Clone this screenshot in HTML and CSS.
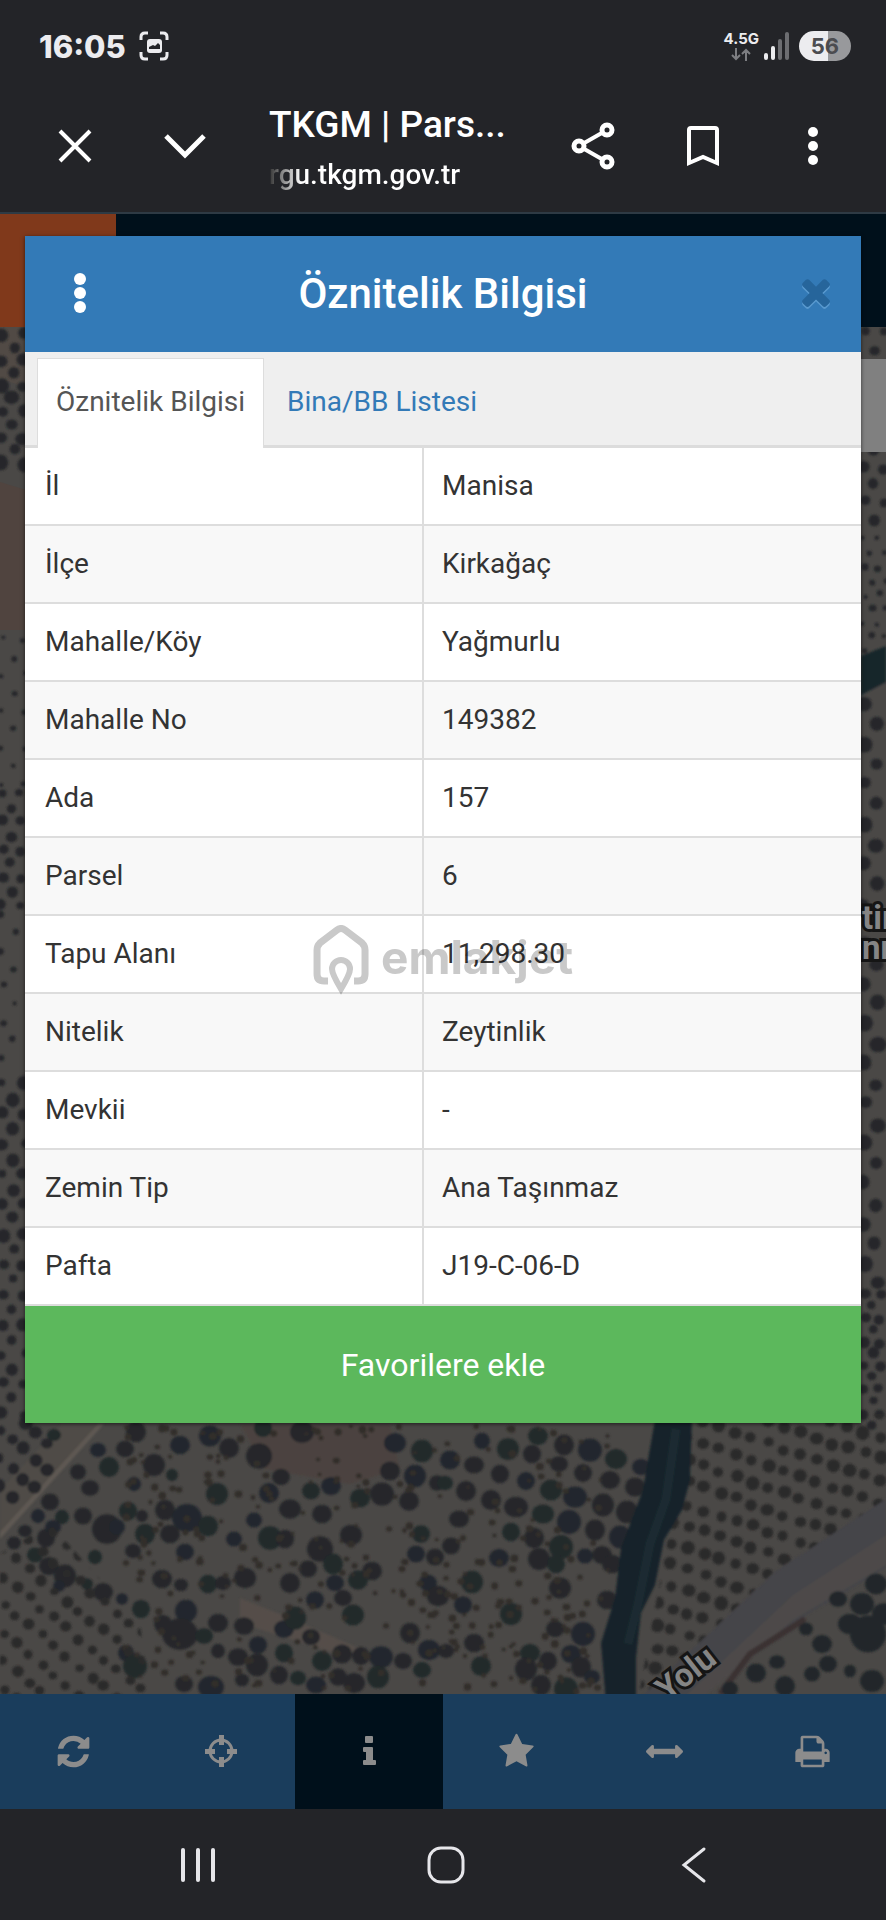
FILE: index.html
```html
<!DOCTYPE html>
<html lang="tr">
<head>
  <meta charset="UTF-8" />
  <meta name="viewport" content="width=device-width, initial-scale=1.0"/>
  <title>TKGM | Parsel Sorgu</title>
  <link rel="stylesheet" href="styles.css">
</head>
<body>
  <div class="status-bar">
    <span class="clock">16:05</span>
    <svg class="capture-icon" width="30" height="30" viewBox="0 0 30 30">
      <path d="M2 9V6q0-4 4-4h3M21 2h3q4 0 4 4v3M28 21v3q0 4-4 4h-3M9 28H6q-4 0-4-4v-3" fill="none" stroke="#ececef" stroke-width="3"/>
      <rect x="8" y="8" width="15" height="14" rx="3" fill="#ececef"/>
      <path d="M10 18v-2l4-2 2 1 3-3 2 2v4z" fill="#232428"/>
    </svg>
    <div class="network">
      <span>4.5G</span>
      <svg width="20" height="13" viewBox="0 0 20 13">
        <path d="M5 0v11M1 7l4 4 4-4M15 13V2M11 6l4-4 4 4" fill="none" stroke="#7d7e82" stroke-width="2"/>
      </svg>
    </div>
    <svg class="signal" width="27" height="28" viewBox="0 0 27 28">
      <g stroke-width="4" stroke-linecap="round">
        <path d="M3 23v3M10 16v10" stroke="#ececef"/>
        <path d="M17 9v17M24 2v24" stroke="#6c6d71"/>
      </g>
    </svg>
    <span class="battery">56</span>
  </div>

  <header class="browser-bar">
    <button type="button" aria-label="Kapat">
      <svg width="34" height="34" viewBox="0 0 34 34"><path d="M2 2l30 30M32 2L2 32" stroke="#fff" stroke-width="4"/></svg>
    </button>
    <button type="button" aria-label="Küçült">
      <svg width="42" height="26" viewBox="0 0 42 26"><path d="M2 3l19 19L40 3" fill="none" stroke="#fff" stroke-width="5"/></svg>
    </button>
    <div class="page-info">
      <div class="page-title">TKGM | Pars...</div>
      <div class="page-url">rgu.tkgm.gov.tr</div>
    </div>
    <button type="button" aria-label="Paylaş">
      <svg width="44" height="48" viewBox="0 0 44 48" fill="none" stroke="#fff">
        <path d="M8 24L36 8M8 24l28 16" stroke-width="4"/>
        <g fill="#232428" stroke-width="5"><circle cx="8" cy="24" r="5"/><circle cx="36" cy="8" r="5"/><circle cx="36" cy="40" r="5"/></g>
      </svg>
    </button>
    <button type="button" aria-label="Yer imi">
      <svg width="34" height="42" viewBox="0 0 34 42"><path d="M3 38V5q0-2 2-2h24q2 0 2 2v33l-14-6z" fill="none" stroke="#fff" stroke-width="4"/></svg>
    </button>
    <button type="button" aria-label="Menü">
      <svg width="10" height="38" viewBox="0 0 10 38" fill="#fff"><circle cx="5" cy="5" r="5"/><circle cx="5" cy="19" r="5"/><circle cx="5" cy="33" r="5"/></svg>
    </button>
  </header>

  <main class="viewport">
    <svg class="map" viewBox="0 0 886 1480" preserveAspectRatio="xMidYMax slice" aria-hidden="true">
      <defs>
        <clipPath id="east"><path d="M692 1200h200v85L776 1356 640 1485h-2l30-160z"/></clipPath>
        <clipPath id="west"><path d="M0 1340l50-30 90 100 10 80H0z"/></clipPath>
        <filter id="soft"><feGaussianBlur stdDeviation="1"/></filter>
      </defs>
      <rect width="886" height="1480" fill="#4a4846"/>
      <path d="M0 268l26 8v140H0z" fill="#50443f"/>
      <path d="M0 113h26v60L0 165z" fill="#514a45"/>
      <g filter="url(#soft)">
        <path d="M240 1210h150l10 45-50 15-85-15z" fill="#4c433f"/>
        <path d="M0 1276l62-66h42L0 1322z" fill="#4f4b47"/>
        <path d="M104 1210L0 1325v-7l98-108z" fill="#5e5953"/>
        <path d="M240 1384l50 20 80 35-20 5-110-35z" fill="#544e49"/>
        <g id="trees" fill="#25282b"></g>
        <g id="orchard-west" clip-path="url(#west)" fill="#2c2a29"></g>
        <g id="orchard-east" clip-path="url(#east)" fill="#2c2b2b"></g>
        <path d="M656 1200h36l-2 66-8 30-18 30-9 45-14 28-5 45v45h-30l-5-60 14-45 6-50 22-58 6-36z" fill="#17242a"/>
        <path d="M676 1215l-10 70-16 45-12 60-10 40" fill="none" stroke="#1a2b30" stroke-width="9"/>
        <path d="M886 1285l-110 72-136 127h50l103-75 93-55z" fill="#454448"/>
        <path d="M886 1321l-93 60-110 103h20l90-78 93-55z" fill="#4d4a48"/>
        <path d="M805 1405l-55 35-30 40" fill="none" stroke="#3a3133" stroke-width="6"/>
        <g id="village" fill="#22282a"></g>
        <path d="M861 442l25-10v36l-25 13z" fill="#16252a"/>
      </g>
      <rect x="861" y="145" width="25" height="93" fill="#808080"/>
      <g class="map-label">
        <text x="862" y="715">tir</text>
        <text x="862" y="745">nn</text>
        <text x="667" y="1488" transform="rotate(-38 667 1488)">Yolu</text>
      </g>
    </svg>
    <div class="site-header"><div class="site-logo"></div></div>

    <section class="modal" role="dialog" aria-labelledby="modal-title">
      <div class="modal-header">
        <button type="button" class="menu" aria-label="Seçenekler">
          <svg width="12" height="40" viewBox="0 0 12 40" fill="#fff"><circle cx="6" cy="6" r="6"/><circle cx="6" cy="20" r="6"/><circle cx="6" cy="34" r="6"/></svg>
        </button>
        <h1 id="modal-title">Öznitelik Bilgisi</h1>
        <button type="button" class="close" aria-label="Kapat">
          <svg width="42" height="42" viewBox="0 60 1792 1792"><path d="M1490 1322q0 40-28 68l-136 136q-28 28-68 28t-68-28l-294-294-294 294q-28 28-68 28t-68-28l-136-136q-28-28-28-68t28-68l294-294-294-294q-28-28-28-68t28-68l136-136q28-28 68-28t68 28l294 294 294-294q28-28 68-28t68 28l136 136q28 28 28 68t-28 68l-294 294 294 294q28 28 28 68z"/></svg>
        </button>
      </div>
      <nav class="tabs">
        <a href="#" class="active">Öznitelik Bilgisi</a>
        <a href="#">Bina/BB Listesi</a>
      </nav>
      <table>
        <tbody>
          <tr><th scope="row">İl</th><td>Manisa</td></tr>
          <tr><th scope="row">İlçe</th><td>Kirkağaç</td></tr>
          <tr><th scope="row">Mahalle/Köy</th><td>Yağmurlu</td></tr>
          <tr><th scope="row">Mahalle No</th><td>149382</td></tr>
          <tr><th scope="row">Ada</th><td>157</td></tr>
          <tr><th scope="row">Parsel</th><td>6</td></tr>
          <tr><th scope="row">Tapu Alanı</th><td>11,298.30</td></tr>
          <tr><th scope="row">Nitelik</th><td>Zeytinlik</td></tr>
          <tr><th scope="row">Mevkii</th><td>-</td></tr>
          <tr><th scope="row">Zemin Tip</th><td>Ana Taşınmaz</td></tr>
          <tr><th scope="row">Pafta</th><td>J19-C-06-D</td></tr>
        </tbody>
      </table>
      <button type="button" class="favorite">Favorilere ekle</button>
    </section>
  </main>

  <nav class="toolbar">
    <button type="button" aria-label="Yenile">
      <svg viewBox="0 0 1792 1792"><path d="M1639 1056q0 5-1 7-64 268-268 434.500T892 1664q-146 0-282.500-55T366 1452l-129 129q-19 19-45 19t-45-19-19-45v-448q0-26 19-45t45-19h448q26 0 45 19t19 45-19 45l-137 137q71 66 161 102t187 36q134 0 250-65t186-179q11-17 53-117 8-23 30-23h192q13 0 22.500 9.500t9.500 22.500zm25-800v448q0 26-19 45t-45 19h-448q-26 0-45-19t-19-45 19-45l138-138q-148-137-349-137-134 0-250 65T460 628q-11 17-53 117-8 23-30 23H178q-13 0-22.500-9.500T146 736v-7q65-268 270-434.500T896 128q146 0 284 55.500T1425 340l130-129q19-19 45-19t45 19 19 45z"/></svg>
    </button>
    <button type="button" aria-label="Konumum">
      <svg viewBox="0 0 37 37"><circle cx="18" cy="18" r="11" fill="none" stroke="#8c8c8c" stroke-width="3"/><path d="M16 2h5v10h-5zM16 24h5v10h-5zM2 16h10v5H2zM24 16h10v5H24z"/></svg>
    </button>
    <button type="button" class="active" aria-label="Bilgi">
      <svg viewBox="0 0 37 37"><path d="M15 3h6q1 0 1 1v5q0 1-1 1h-6q-1 0-1-1V4q0-1 1-1zM13 14h8q1 0 1 1v12h2q1 0 1 1v3q0 1-1 1H13q-1 0-1-1v-3q0-1 1-1h2v-8h-2q-1 0-1-1v-3q0-1 1-1z"/></svg>
    </button>
    <button type="button" aria-label="Favoriler">
      <svg viewBox="0 0 1792 1792"><path d="M1728 647q0 22-26 48l-363 354 86 500q1 7 1 20 0 21-10.500 35.500T1385 1619q-19 0-40-12l-449-236-449 236q-22 12-40 12-21 0-31.500-14.500T365 1569q0-6 2-20l86-500L89 695q-25-27-25-48 0-37 56-46l502-73L847 73q19-41 49-41t49 41l225 455 502 73q56 9 56 46z"/></svg>
    </button>
    <button type="button" aria-label="Ölçüm">
      <svg viewBox="0 0 1792 1792"><path d="M1792 896q0 26-19 45l-256 256q-19 19-45 19t-45-19-19-45v-128H384v128q0 26-19 45t-45 19-45-19L19 941q-19-19-19-45t19-45l256-256q19-19 45-19t45 19 19 45v128h1024V640q0-26 19-45t45-19 45 19l256 256q19 19 19 45z"/></svg>
    </button>
    <button type="button" aria-label="Yazdır">
      <svg viewBox="0 0 1792 1792"><path d="M448 1536h896v-256H448v256zm0-640h896V512h-160q-40 0-68-28t-28-68V256H448v640zm1152 64q0-26-19-45t-45-19-45 19-19 45 19 45 45 19 45-19 19-45zm128 0v416q0 13-9.500 22.500t-22.500 9.500h-224v160q0 40-28 68t-68 28H416q-40 0-68-28t-28-68v-160H96q-13 0-22.500-9.500T64 1376V960q0-79 56.500-135.500T256 768h64V224q0-40 28-68t68-28h672q40 0 88 20t76 48l152 152q28 28 48 76t20 88v256h64q79 0 135.500 56.500T1728 960z"/></svg>
    </button>
  </nav>

  <nav class="system-nav">
    <button type="button" aria-label="Son uygulamalar">
      <svg width="34" height="36" viewBox="0 0 34 36"><path d="M2 3v30M17 3v30M32 3v30" stroke="#e6e6ea" stroke-width="4" stroke-linecap="round"/></svg>
    </button>
    <button type="button" aria-label="Ana ekran">
      <svg width="38" height="38" viewBox="0 0 38 38"><rect x="2" y="2" width="34" height="34" rx="12" fill="none" stroke="#e6e6ea" stroke-width="3"/></svg>
    </button>
    <button type="button" aria-label="Geri">
      <svg width="26" height="38" viewBox="0 0 26 38"><path d="M23 3L3 19l20 16" fill="none" stroke="#e6e6ea" stroke-width="3" stroke-linecap="round"/></svg>
    </button>
  </nav>

  <div class="watermark" aria-hidden="true">
    <svg width="56" height="70" viewBox="0 0 56 70" fill="none" stroke="#c9c9c9" stroke-width="7">
      <path d="M15 56h-4q-7 0-7-7V25q0-4 3-7L24 5q4-3 8 0l17 13q3 3 3 7v24q0 7-7 7h-4" />
      <path d="M28 64q-9-15-9-20a9 9 0 0 1 18 0q0 5-9 20z" stroke-width="6"/>
    </svg>
    <span>emlakjet</span>
  </div>

  <script src="map.js"></script>
</body>
</html>
```
FILE: styles.css
```css
* {
  box-sizing: border-box;
}
body {
  display: flex;
  flex-direction: column;
  min-height: 100vh;
  margin: 0;
  font-family: Roboto, "Liberation Sans", sans-serif;
  font-size: 28px;
  color: #333;
  background: #232428;
}
button {
  display: flex;
  align-items: center;
  justify-content: center;
  padding: 0;
  border: none;
  background: none;
  font-family: inherit;
  cursor: pointer;
}

/* Phone status bar */
.status-bar {
  display: flex;
  align-items: center;
  height: 92px;
  padding: 0 35px 0 39px;
  font-family: Inter, "Liberation Sans", sans-serif;
  font-weight: 700;
  color: #ececef;
}
.clock {
  font-size: 31px;
  font-weight: 800;
}
.capture-icon {
  margin-left: 13px;
}
.network {
  display: flex;
  flex-direction: column;
  align-items: center;
  gap: 2px;
  margin-left: auto;
  font-size: 15px;
  line-height: 14px;
}
.signal {
  margin: 0 9px 0 4px;
}
.battery {
  width: 52px;
  border-radius: 15px;
  background: linear-gradient(90deg, #ececef 56%, #98999c 56%);
  color: #4b4c50;
  font-size: 22px;
  line-height: 30px;
  text-align: center;
}

/* Browser bar */
.browser-bar {
  display: flex;
  align-items: center;
  height: 122px;
  padding: 0 18px 12px 20px;
  border-bottom: 2px solid #2e3a44;
}
.browser-bar button {
  flex: 0 0 110px;
  height: 100px;
}
.page-info {
  flex: 1;
  min-width: 0;
  margin-left: 29px;
  padding-top: 6px;
  color: #fff;
  white-space: nowrap;
}
.page-title {
  font-size: 37px;
  font-weight: 500;
  line-height: 52px;
}
.page-url {
  font-size: 28px;
  font-weight: 500;
  line-height: 48px;
  background: linear-gradient(90deg, #333 0, #fff 32px);
  background-clip: text;
  color: transparent;
}

/* Map page */
.viewport {
  position: relative;
  flex: 1;
  overflow: hidden;
  padding: 22px 25px;
}
.map {
  position: absolute;
  inset: 0;
  width: 100%;
  height: 100%;
}
.map-label {
  font-size: 33px;
  font-weight: 700;
  fill: #858585;
  stroke: #151515;
  stroke-width: 6px;
  paint-order: stroke;
}
.site-header {
  position: absolute;
  inset: 0 0 auto;
  height: 113px;
  background: #00101b;
}
.site-logo {
  width: 116px;
  height: 100%;
  background: #80391b;
}

/* Attribute dialog */
.modal {
  position: relative;
  background: #fff;
  box-shadow: 0 1px 4px rgba(0, 0, 0, 0.6);
}
.modal-header {
  display: grid;
  grid-template-columns: 110px 1fr 110px;
  align-items: center;
  height: 116px;
  padding-bottom: 2px;
  background: #337ab7;
}
.modal-header h1 {
  margin: 0;
  color: #fff;
  font-size: 42px;
  font-weight: 500;
  text-align: center;
}
.close {
  justify-content: flex-end;
  padding-right: 24px;
}
.close path {
  fill: #26659b;
  filter: drop-shadow(0 80px 0 #5b9bd0);
}
.tabs {
  display: flex;
  gap: 4px;
  height: 96px;
  padding: 6px 12px 0;
  background: #efefef;
  border-bottom: 3px solid #dcdcdc;
}
.tabs a {
  height: 90px;
  padding: 0 18px;
  border: 1px solid transparent;
  border-bottom: none;
  color: #337ab7;
  line-height: 86px;
  text-decoration: none;
}
.tabs .active {
  border-color: #ddd;
  background: #fff;
  color: #555;
}
table {
  width: 100%;
  border-collapse: separate;
  border-spacing: 0;
}
th,
td {
  padding: 18px;
  border-bottom: 2px solid #ddd;
  font-weight: 400;
  line-height: 40px;
  text-align: left;
}
th {
  width: 399px;
  padding-left: 20px;
  border-right: 2px solid #ddd;
}
tr:nth-child(even) {
  background: #f8f8f8;
}
.favorite {
  width: 100%;
  height: 117px;
  background: #5cb85c;
  color: #fff;
  font-size: 32px;
}

/* Map tools */
.toolbar {
  display: flex;
  height: 115px;
  background: #1a3d5c;
}
.toolbar button {
  flex: 1;
}
.toolbar .active {
  background: #00101b;
}
.toolbar svg {
  width: 37px;
  height: 37px;
  fill: #8c8c8c;
}

.system-nav {
  display: flex;
  height: 111px;
  padding: 0 68px 0 74px;
}
.system-nav button {
  flex: 1;
}

.watermark {
  position: fixed;
  top: 50%;
  left: 50%;
  display: flex;
  align-items: center;
  gap: 12px;
  transform: translate(-50%, -50%);
  color: #c9c9c9;
  font-family: Inter, sans-serif;
  font-size: 46px;
  font-weight: 700;
  line-height: 50px;
  mix-blend-mode: multiply;
  pointer-events: none;
}
.watermark span {
  padding-bottom: 6px;
}
```
FILE: map.js
```js
// Small seeded generator so the trees stay in place between loads
let seed = 7;
function rand(min, max) {
  seed = (seed * 16807) % 2147483647;
  return min + (seed / 2147483647) * (max - min);
}

function addTree(group, x, y, r, fill) {
  const el = document.createElementNS("http://www.w3.org/2000/svg", "ellipse");
  el.setAttribute("cx", x.toFixed(1));
  el.setAttribute("cy", y.toFixed(1));
  el.setAttribute("rx", r.toFixed(1));
  el.setAttribute("ry", (r * rand(0.85, 1.05)).toFixed(1));
  if (fill) el.setAttribute("fill", fill);
  document.getElementById(group).appendChild(el);
}

// Trees on a slanted grid inside a box
function plant(group, x0, y0, x1, y1, stepX, stepY, rMin, rMax, slope) {
  let row = 0;
  for (let y = y0; y < y1; y += stepY) {
    for (let x = x0 + (row % 2) * stepX / 2; x < x1; x += stepX) {
      addTree(group, x + rand(-2, 2), y + (x - x0) * slope + rand(-2, 2), rand(rMin, rMax));
    }
    row++;
  }
}

// Large trees below the dialog: x, y, radius
const bigTrees = [
  [54, 1221, 7], [136, 1218, 10], [125, 1235, 9], [98, 1236, 8], [109, 1253, 10], [78, 1258, 8],
  [180, 1231, 10], [154, 1251, 11], [172, 1261, 6], [210, 1222, 11], [229, 1234, 10], [259, 1242, 13],
  [263, 1214, 9], [302, 1218, 12], [281, 1263, 9], [269, 1279, 10], [217, 1280, 11], [90, 1274, 9],
  [134, 1270, 7], [50, 1288, 9], [62, 1303, 7], [38, 1302, 7], [25, 1317, 7], [83, 1302, 9],
  [128, 1297, 9], [142, 1302, 6], [107, 1315, 15], [117, 1313, 8], [145, 1320, 10], [165, 1296, 10],
  [187, 1304, 15], [170, 1320, 10], [208, 1312, 10], [185, 1338, 9], [133, 1337, 8], [14, 1329, 7],
  [35, 1341, 8], [49, 1352, 10], [65, 1362, 11], [59, 1372, 6], [95, 1343, 7], [46, 1324, 9],
  [53, 1313, 8], [103, 1378, 10], [87, 1370, 6], [122, 1385, 6], [162, 1365, 10], [181, 1371, 7],
  [208, 1370, 9], [223, 1369, 8], [245, 1364, 11], [234, 1325, 8], [270, 1324, 12], [285, 1325, 9],
  [254, 1306, 8], [290, 1295, 11], [311, 1277, 9], [331, 1272, 10], [322, 1300, 10], [351, 1321, 11],
  [360, 1284, 10], [382, 1280, 12], [409, 1287, 10], [395, 1229, 11], [422, 1237, 11], [390, 1257, 10],
  [415, 1262, 11], [437, 1269, 8], [421, 1320, 9], [416, 1340, 9], [435, 1343, 9], [320, 1335, 13],
  [333, 1350, 10], [308, 1355, 9], [290, 1369, 10], [335, 1369, 9], [358, 1366, 10], [372, 1357, 10],
  [428, 1369, 9], [438, 1382, 11], [141, 1395, 9], [186, 1397, 11], [180, 1420, 18], [163, 1410, 9],
  [204, 1422, 9], [218, 1409, 10], [244, 1412, 10], [284, 1415, 10], [295, 1404, 11], [311, 1423, 9],
  [315, 1386, 9], [343, 1384, 9], [353, 1401, 11], [258, 1431, 9], [238, 1443, 10], [257, 1451, 11],
  [284, 1439, 9], [279, 1461, 9], [218, 1437, 7], [126, 1439, 8], [135, 1452, 12], [184, 1470, 9],
  [211, 1473, 13], [242, 1466, 7], [298, 1464, 8], [316, 1471, 10], [338, 1463, 9], [354, 1469, 11],
  [322, 1447, 10], [342, 1440, 10], [361, 1442, 9], [381, 1443, 12], [378, 1463, 11], [403, 1447, 9],
  [429, 1436, 11], [410, 1419, 10], [422, 1456, 9], [450, 1246, 10], [474, 1251, 10], [500, 1260, 9],
  [508, 1235, 11], [532, 1240, 9], [559, 1250, 9], [482, 1227, 8], [538, 1222, 10], [564, 1231, 10],
  [590, 1236, 12], [583, 1259, 9], [616, 1245, 11], [641, 1253, 9], [610, 1266, 10], [635, 1273, 10],
  [445, 1269, 8], [466, 1277, 10], [491, 1286, 10], [526, 1267, 9], [551, 1276, 11], [516, 1293, 12],
  [575, 1283, 12], [603, 1291, 11], [543, 1300, 11], [569, 1308, 12], [627, 1298, 11], [459, 1305, 10],
  [511, 1318, 9], [534, 1324, 10], [595, 1316, 10], [620, 1323, 11], [561, 1333, 12], [451, 1332, 9],
  [499, 1344, 10], [539, 1345, 11], [556, 1350, 9], [585, 1342, 8], [602, 1341, 10], [612, 1350, 10],
  [472, 1368, 11], [560, 1374, 11], [607, 1386, 10], [463, 1391, 9], [511, 1400, 11], [555, 1415, 9],
  [583, 1420, 12], [474, 1429, 10], [530, 1439, 10], [571, 1440, 10], [526, 1455, 11], [581, 1453, 10],
  [481, 1452, 10], [548, 1447, 9], [541, 1471, 10], [592, 1463, 8], [566, 1475, 12], [446, 1437, 8]
];
bigTrees.forEach(([x, y, r], i) => {
  addTree("trees", x, y, r, i % 4 === 0 ? "#21292a" : i % 3 === 0 ? "#24272d" : "");
});

// Saplings between them
for (let i = 0; i < 330; i++) {
  addTree("trees", rand(125, 610), rand(1212, 1478), rand(2, 4), "#322e2b");
}
plant("trees", 0, 1215, 60, 1290, 24, 14, 5, 7, -0.3);

plant("orchard-west", 4, 1335, 200, 1560, 25, 14, 4, 6, -0.3);
plant("orchard-east", 640, 1230, 886, 1600, 32, 11, 5, 7, -0.35);

// Strips on both sides of the dialog
plant("trees", 2, 120, 26, 260, 22, 13, 5, 8, 0);
plant("trees", 2, 425, 26, 570, 22, 18, 2, 3, 0);
plant("trees", 2, 580, 26, 700, 18, 14, 4, 6, 0);
plant("trees", 2, 700, 26, 860, 24, 18, 2, 4, 0);
plant("trees", 2, 870, 26, 1210, 22, 15, 4, 7, 0);
plant("trees", 864, 118, 886, 320, 20, 17, 4, 7, 0);
plant("trees", 864, 325, 886, 440, 14, 14, 2, 4, 0);
plant("trees", 864, 490, 886, 1080, 24, 20, 6, 9, 0);
plant("trees", 864, 1080, 886, 1215, 16, 12, 4, 6, 0);

// Gardens south of the road
[[838, 1385, 9], [862, 1390, 12], [876, 1370, 11], [822, 1430, 10], [850, 1410, 12], [868, 1420, 18],
 [884, 1400, 12], [828, 1450, 9], [777, 1448, 8], [756, 1459, 10], [785, 1472, 10], [806, 1415, 7],
 [850, 1457, 6], [872, 1467, 12], [812, 1460, 8], [730, 1475, 8]
].forEach(([x, y, r]) => addTree("village", x, y, r));
```
